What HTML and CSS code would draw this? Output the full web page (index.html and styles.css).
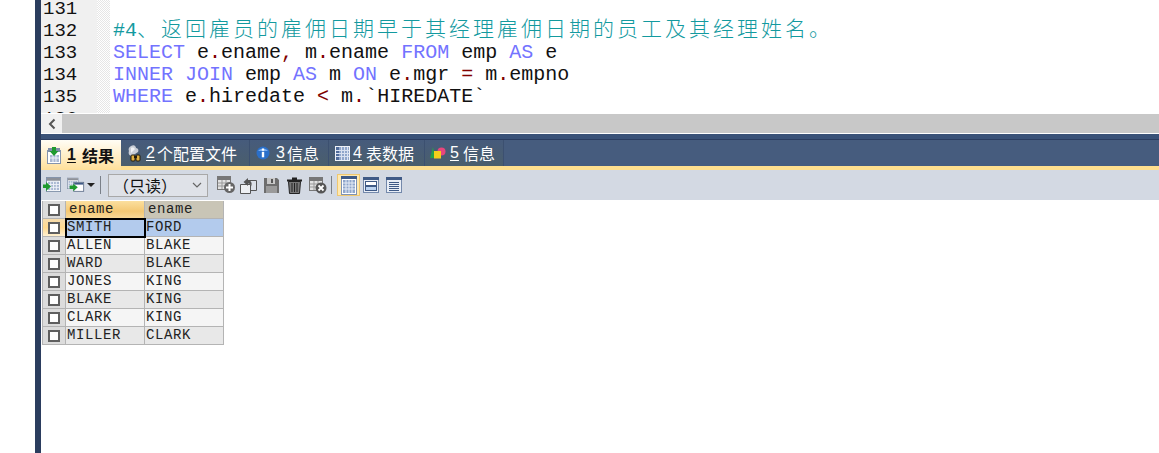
FILE: index.html
```html
<!DOCTYPE html>
<html lang="zh">
<head>
<meta charset="utf-8">
<title>SQLyog</title>
<link rel="stylesheet" href="styles.css">
</head>
<body>
<svg class="defs" width="0" height="0" aria-hidden="true">
  <defs>
    <symbol id="tbl" viewBox="0 0 16 16">
      <rect x="0.5" y="0.5" width="15" height="15" fill="#fff" stroke="#7f8fa8"/>
      <rect x="1" y="1" width="14" height="3" fill="#8d9199"/>
      <path d="M2 5h12v9H2z" fill="#a9b8d2"/>
      <path d="M5 5v9M8 5v9M11 5v9M2 8h12M2 11h12" stroke="#eef2f8"/>
    </symbol>
    <symbol id="view-grid" viewBox="0 0 16 19">
      <rect x="0.5" y="0.5" width="15" height="18" fill="#fff" stroke="#7f93b5"/>
      <rect x="0" y="0" width="16" height="3" fill="#3f5a86"/>
      <path d="M2 4h12v13H2z" fill="#8fa6cb"/>
      <path d="M5 4v13M8 4v13M11 4v13M2 7h12M2 10h12M2 13h12" stroke="#e6ecf6"/>
    </symbol>
    <symbol id="view-form" viewBox="0 0 16 16">
      <rect x="0.5" y="0.5" width="15" height="15" fill="#e9eef6" stroke="#7489ab"/>
      <rect x="0" y="0" width="16" height="3" fill="#3f5a86"/>
      <rect x="2.5" y="4.5" width="11" height="4" fill="#fff" stroke="#3f5a86"/>
      <rect x="2.5" y="9.5" width="11" height="4" fill="#bcd4f2" stroke="#3f5a86"/>
    </symbol>
    <symbol id="view-text" viewBox="0 0 16 16">
      <rect x="0.5" y="0.5" width="15" height="15" fill="#e9eef6" stroke="#7489ab"/>
      <rect x="0" y="0" width="16" height="3" fill="#3f5a86"/>
      <path d="M3 5.5h10M3 7.5h10M3 9.5h10M3 11.5h10M3 13.5h10" stroke="#3f5a86"/>
    </symbol>
  </defs>
</svg>

<div class="stripe"></div>
<main class="app">
  <section class="editor">
    <div class="gutter">
      <div class="ln">131</div><div class="ln">132</div><div class="ln">133</div>
      <div class="ln">134</div><div class="ln">135</div><div class="ln">136</div>
    </div>
    <div class="fold"></div>
    <div class="code">
      <div class="line"></div>
      <div class="line cm">#4<span class="cjk">、返回雇员的雇佣日期早于其经理雇佣日期的员工及其经理姓名。</span></div>
      <div class="line"><b class="kw">SELECT</b> e<i class="op">.</i>ename<i class="op">,</i> m<i class="op">.</i>ename <b class="kw">FROM</b> emp <b class="kw">AS</b> e</div>
      <div class="line"><b class="kw">INNER</b> <b class="kw">JOIN</b> emp <b class="kw">AS</b> m <b class="kw">ON</b> e<i class="op">.</i>mgr <i class="op">=</i> m<i class="op">.</i>empno</div>
      <div class="line"><b class="kw">WHERE</b> e<i class="op">.</i>hiredate <i class="op">&lt;</i> m<i class="op">.</i>`HIREDATE`</div>
    </div>
  </section>

  <div class="hscroll">
    <div class="hbtn">
      <svg width="10" height="12" viewBox="0 0 10 12"><path d="M7.5 1.5 3 6l4.5 4.5" fill="none" stroke="#555" stroke-width="2"/></svg>
    </div>
  </div>

  <nav class="tabs">
    <div class="tab tab-on t1">
      <svg class="ti" width="14" height="17" viewBox="0 0 14 17">
        <rect x="0.5" y="3.5" width="13" height="13" fill="#fff" stroke="#8494ae"/>
        <rect x="1" y="1" width="12" height="4" fill="#7f8ea8"/>
        <path d="M3 8h9v7H3z" fill="#a9b8d2"/>
        <path d="M6 8v7M9 8v7M3 11h9" stroke="#eef2f8"/>
        <path d="M5 0h4v4h2.500L7 9 2.500 4H5z" fill="#1f9a2f"/>
      </svg>
      <u>1</u><span class="tl">结果</span>
    </div>
    <div class="tab t2">
      <svg class="ti" width="17" height="17" viewBox="0 0 17 17">
        <path d="M4 1c3-2 5 0 5 2 2 0 3 2 2 4l-6 4C2 11 1 8 2 6 1 4 2 2 4 1z" fill="#c9ced6"/>
        <path d="M4 3c2-1 3 0 4 1L4 8z" fill="#f1f3f6"/>
        <rect x="4" y="10" width="4" height="6" rx="1" fill="#e0b040" stroke="#221a08"/>
        <rect x="9" y="10" width="4" height="6" rx="1" fill="#e0b040" stroke="#221a08"/>
        <rect x="7" y="11" width="3" height="2" fill="#221a08"/>
      </svg>
      <u>2</u><span class="tl">个配置文件</span>
    </div>
    <div class="tab t3">
      <svg class="ti" width="14" height="14" viewBox="0 0 14 14">
        <circle cx="7" cy="7" r="6.500" fill="#2a6fc9"/>
        <path d="M2 5a5.500 4 0 0 1 10 0z" fill="#79aef0"/>
        <rect x="5.800" y="2.500" width="2.400" height="2.200" fill="#fff"/>
        <rect x="5.800" y="5.800" width="2.400" height="5.500" fill="#fff"/>
      </svg>
      <u>3</u><span class="tl">信息</span>
    </div>
    <div class="tab t4">
      <svg class="ti" width="15" height="15" viewBox="0 0 15 15">
        <rect x="0.500" y="0.500" width="14" height="14" fill="#fff" stroke="#eef2f8"/>
        <rect x="1" y="1" width="13" height="13" fill="#8fa6cb"/>
        <rect x="1" y="1" width="3" height="13" fill="#4f6b9a"/>
        <path d="M6.500 1v13M9.500 1v13M12.500 1v13M1 4.500h13M1 7.500h13M1 10.500h13" stroke="#d8e1f0"/>
      </svg>
      <u>4</u><span class="tl">表数据</span>
    </div>
    <div class="tab t5">
      <svg class="ti" width="16" height="12" viewBox="0 0 16 12">
        <path d="M0 11 3 0l2 11z" fill="#27a04a"/>
        <circle cx="11.500" cy="4.500" r="4" fill="#e8467c"/>
        <rect x="4" y="4" width="7" height="7.500" fill="#f4cf1b"/>
      </svg>
      <u>5</u><span class="tl">信息</span>
    </div>
    <div class="tab-rest"></div>
  </nav>

  <div class="toolbar">
    <svg class="tb b1" width="18" height="16" viewBox="0 0 18 16">
      <g transform="translate(3 0) scale(.94)"><use href="#tbl" width="16" height="16"/></g>
      <path d="M3 7.500V5l5 4.500L3 14v-3H0V7.500z" fill="#1f9a2f"/>
    </svg>
    <svg class="tb b2" width="18" height="17" viewBox="0 0 20 18">
      <use href="#tbl" width="13" height="13"/>
      <rect x="7.500" y="5.500" width="11" height="10" fill="#fff" stroke="#66768f"/>
      <rect x="8" y="6" width="10" height="2" fill="#3f5a86"/>
      <path d="M7 9V7l5 4-5 4.500V13H3V9z" fill="#1f9a2f"/>
    </svg>
    <svg class="tb b3" width="8" height="4" viewBox="0 0 8 4"><path d="M0 0h8L4 4z" fill="#222"/></svg>
    <span class="sep s1"></span>
    <div class="select">
      <span class="sel-text">（只读）</span>
      <svg width="10" height="6" viewBox="0 0 10 6"><path d="M1 1l4 4 4-4" fill="none" stroke="#666" stroke-width="1.200"/></svg>
    </div>
    <svg class="tb b4" width="19" height="18" viewBox="0 0 19 18">
      <rect x="0.500" y="0.500" width="13" height="13" fill="#e2e2e2" stroke="#777"/>
      <rect x="1" y="1" width="12" height="3" fill="#777"/>
      <path d="M5 4v9M9 4v9M1 7h12M1 10h12" stroke="#999"/>
      <circle cx="12.500" cy="11.500" r="5.500" fill="#666"/>
      <path d="M12.500 8v7M9 11.500h7" stroke="#fff" stroke-width="2"/>
    </svg>
    <svg class="tb b5" width="17" height="17" viewBox="0 0 17 17">
      <path d="M6.500 3.500h10v10h-10z" fill="#dde1e8" stroke="#555"/>
      <path d="M.5 7.500h10v9H.5z" fill="#eef0f3" stroke="#555"/>
      <path d="M8 1 3.500 5 8 9V6.500c2 0 3 1 3 3 1.500-3 .5-6-3-6z" fill="#555"/>
    </svg>
    <svg class="tb b6" width="15" height="15" viewBox="0 0 15 15">
      <path d="M0 0h13l2 2v13H0z" fill="#6d6d6d"/>
      <rect x="3" y="0" width="8" height="6" fill="#c8c8c8"/>
      <rect x="7" y="1" width="2" height="4" fill="#555"/>
      <rect x="2" y="8" width="11" height="7" fill="#9a9a9a"/>
    </svg>
    <svg class="tb b7" width="15" height="17" viewBox="0 0 15 17">
      <path d="M5 1.500h5M0 3.500h15" stroke="#222" stroke-width="2"/>
      <path d="M1.500 4.500h12l-1 12h-10z" fill="#777" stroke="#222"/>
      <path d="M5 6v9M7.500 6v9M10 6v9" stroke="#222"/>
    </svg>
    <svg class="tb b8" width="18" height="17" viewBox="0 0 18 17">
      <rect x="0.500" y="0.500" width="13" height="13" fill="#e2e2e2" stroke="#777"/>
      <rect x="1" y="1" width="12" height="3" fill="#777"/>
      <path d="M5 4v9M9 4v9M1 7h12M1 10h12" stroke="#999"/>
      <circle cx="12" cy="11" r="5.500" fill="#555"/>
      <path d="M9.500 8.500l5 5M14.500 8.500l-5 5" stroke="#fff" stroke-width="1.800"/>
    </svg>
    <span class="sep s2"></span>
    <div class="view-on"><svg width="16" height="19"><use href="#view-grid"/></svg></div>
    <svg class="tb b9" width="16" height="16"><use href="#view-form"/></svg>
    <svg class="tb b10" width="16" height="16"><use href="#view-text"/></svg>
  </div>

  <div class="grid">
    <div class="c sel hd"><span class="check"></span></div>
    <div class="c th th-on">ename</div>
    <div class="c th">ename</div>

    <div class="c sel sel-on"><span class="check"></span></div>
    <div class="c td cur">SMITH</div>
    <div class="c td picked">FORD</div>

    <div class="c sel"><span class="check"></span></div>
    <div class="c td">ALLEN</div>
    <div class="c td">BLAKE</div>

    <div class="c sel"><span class="check"></span></div>
    <div class="c td alt">WARD</div>
    <div class="c td alt">BLAKE</div>

    <div class="c sel"><span class="check"></span></div>
    <div class="c td">JONES</div>
    <div class="c td">KING</div>

    <div class="c sel"><span class="check"></span></div>
    <div class="c td alt">BLAKE</div>
    <div class="c td alt">KING</div>

    <div class="c sel"><span class="check"></span></div>
    <div class="c td">CLARK</div>
    <div class="c td">KING</div>

    <div class="c sel"><span class="check"></span></div>
    <div class="c td alt">MILLER</div>
    <div class="c td alt">CLARK</div>
  </div>
</main>
</body>
</html>
```
FILE: styles.css
```css
* { box-sizing: border-box; }
html, body { margin: 0; height: 100%; overflow: hidden; background: #fff; }
body { display: flex; padding-left: 35px; }
.defs { position: absolute; }
.stripe { width: 6px; flex: none; background: #2b3d5e; }
.app { flex: 1; min-width: 0; display: flex; flex-direction: column; }

/* editor */
.editor { height: 113px; flex: none; display: flex; overflow: hidden; background: #fff; }
.gutter { width: 56px; flex: none; background: #f0f0f0; padding: 0 0 0 2px; }
.ln, .line { height: 22px; line-height: 22px; font-family: "Liberation Mono", monospace; white-space: pre; }
.gutter .ln:first-child, .line:first-child { margin-top: -2px; }
.ln { font-size: 19px; color: #111; }
.fold { width: 13px; flex: none; background: repeating-conic-gradient(#e6e6e6 0 25%, #fff 0 50%) 0 0 / 2px 2px; }
.code { flex: 1; padding-left: 3px; color: #111; }
.line { font-size: 20px; }
.kw { font-weight: 400; color: #7373ff; }
.op { font-style: normal; color: #800000; }
.cm { color: #139a9f; }
.cjk { font-family: "Noto Sans CJK SC", sans-serif; font-size: 21px; line-height: 0; letter-spacing: 3px; font-weight: 300; }

/* scrollbar */
.hscroll { height: 19px; flex: none; background: #c8c8c8; margin-top: 1px; display: flex; }
.hbtn { width: 21px; background: #f0f0f0; display: flex; align-items: center; justify-content: center; }

/* tabs */
.tabs { height: 32px; flex: none; margin-top: 1px; padding-top: 1px; display: flex; align-items: flex-start; background: #465c7e; border-top: 5px solid #3a5278; box-shadow: inset 0 1px 0 #2b3d60; }
.tab { height: 26px; display: flex; align-items: center; color: #fff; font-family: "Noto Sans CJK SC", sans-serif; font-size: 16px; background: linear-gradient(#465b7c, #4a5e6c); border-right: 1px solid #3c5070; white-space: pre; }
.tab u { font-family: "Liberation Sans", sans-serif; font-size: 16px; margin-left: 2px; text-underline-offset: 2px; }
.tl { margin-left: 2px; }
.tab-rest { flex: 1; }
.tab-on { height: 30px; position: relative; z-index: 1; color: #111; font-weight: 700; background: linear-gradient(#fffdf5, #ffe9b8 70%, #ffdf98); border-right: 0; }
.t1 { width: 80px; padding-left: 6px; }
.t2 { width: 129px; padding-left: 6px; }
.t3 { width: 79px; padding-left: 6px; }
.t4 { width: 96px; padding-left: 6px; }
.t5 { width: 79px; padding-left: 5px; }
.t1 u { margin-left: 6px; }
.t1 .tl { margin-left: 6px; }
.t3 u { margin-left: 6px; }
.t4 u { margin-left: 3px; }
.t4 .tl { margin-left: 4px; }
.t5 u { margin-left: 4px; }
.t5 .tl { margin-left: 4px; }

/* toolbar */
.toolbar { height: 34px; flex: none; background: #d3d9e3; border-top: 4px solid #ffdf8e; display: flex; align-items: center; padding-left: 2px; }
.tb { flex: none; }
.b2 { margin-left: 6px; }
.b3 { margin-left: 2px; }
.sep { width: 1px; height: 18px; background: #7a8088; flex: none; }
.s1 { margin-left: 5px; }
.select { width: 100px; height: 23px; margin-left: 7px; flex: none; background: #dfe2e8; border: 1px solid #a8a8a8; display: flex; align-items: center; justify-content: space-between; padding: 0 5px 0 4px; font-family: "Noto Sans CJK SC", sans-serif; font-size: 16px; color: #111; }
.b4 { margin-left: 9px; }
.b5 { margin-left: 4px; }
.b6 { margin-left: 7px; }
.b7 { margin-left: 8px; }
.b8 { margin-left: 7px; }
.s2 { margin-left: 4px; }
.view-on { width: 23px; height: 22px; margin-left: 5px; flex: none; background: #ffe9b0; border: 1px solid #f0c870; display: flex; align-items: center; justify-content: center; }
.view-on svg { display: block; }
.b9 { margin-left: 3px; }
.b10 { margin-left: 7px; }

/* result grid */
.grid { display: grid; grid-template-columns: 24px 79px 79px; grid-auto-rows: 18px; width: 182px; margin: 1px 0 0 1px; font-family: "Liberation Mono", monospace; font-size: 14px; color: #222; }
.c { border-right: 1px solid #b4b4b4; border-bottom: 1px solid #b4b4b4; line-height: 17px; white-space: pre; }
.sel { background: #dcdcdc; display: flex; align-items: center; justify-content: center; padding-right: 1px; border-left: 1px solid #b4b4b4; }
.sel-on { background: linear-gradient(#f6dcae, #ffd98f 50%, #fff0d0); }
.check { width: 12px; height: 12px; background: #fff; border: 2px solid #5f5f5f; }
.th { background: #c9c5b6; padding-left: 3px; letter-spacing: .6px; }
.th-on { background: linear-gradient(#fbdf9e, #f4c874 60%, #f8d897); }
.td { background: #f5f5f5; padding-left: 1px; letter-spacing: .6px; }
.alt { background: #e8e8e8; }
.picked { background: #b3cbed; }
.cur { background: #b3cbed; outline: 2px solid #000; outline-offset: -1px; position: relative; }
```
